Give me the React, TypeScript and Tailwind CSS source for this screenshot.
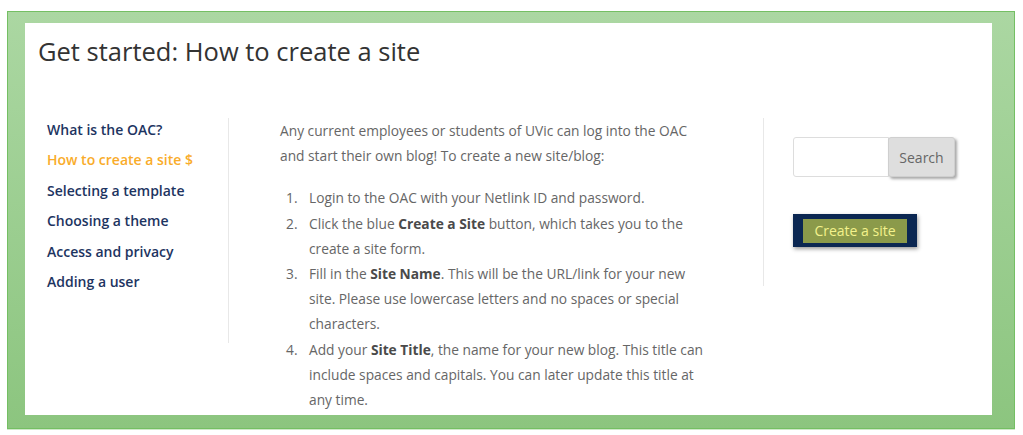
import React from "react";

const navItems = [
  { label: "What is the OAC?", active: false },
  { label: "How to create a site $", active: true },
  { label: "Selecting a template", active: false },
  { label: "Choosing a theme", active: false },
  { label: "Access and privacy", active: false },
  { label: "Adding a user", active: false },
];

export default function App() {
  return (
    <div
      className="w-[1023px] h-[435px] bg-white pt-[11px] pl-[7px] overflow-hidden"
      style={{ fontFamily: '"Open Sans", "Liberation Sans", sans-serif' }}
    >
      <div className="w-[1008px] h-[418px] border border-[#74bf63] bg-gradient-to-b from-[#abd7a2] to-[#8cc57f] pl-[17px] pt-[11px] shadow-[0_1px_0_#cfe8c9]">
        <div className="w-[967px] h-[392px] bg-white overflow-hidden flex flex-col">
          <h1 className="text-[25.5px] leading-[34px] text-[#333333] pl-[13px] pt-[11px] font-normal">
            Get started: How to create a site
          </h1>
          <div className="flex mt-[50px]">
            <nav className="w-[204px] border-r border-[#e8e8e8] h-[225px] pl-[22px]">
              <ul className="flex flex-col -mt-[3px]">
                {navItems.map((item) => (
                  <li
                    key={item.label}
                    className={`text-[14px] leading-[30.4px] font-semibold ${
                      item.active ? "text-[#f9ac2a]" : "text-[#1d3461]"
                    }`}
                  >
                    {item.label}
                  </li>
                ))}
              </ul>
            </nav>
            <div className="w-[535px] border-r border-[#e8e8e8] self-start h-[168px] overflow-visible pl-[51px]">
              <div className="w-[430px] text-[13.75px] leading-[25.2px] text-[#666666]">
                <p>
                  Any current employees or students of UVic can log into the OAC and start their own blog! To create a new site/blog:
                </p>
                <ol className="mt-[17px] flex flex-col">
                  {[
                    <>Login to the OAC with your Netlink ID and password.</>,
                    <>
                      Click the blue <b className="font-bold text-[#4a4a4a]">Create a Site</b> button, which takes you to the create a site form.
                    </>,
                    <>
                      Fill in the <b className="font-bold text-[#4a4a4a]">Site Name</b>. This will be the URL/link for your new site. Please use lowercase letters and no spaces or special characters.
                    </>,
                    <>
                      Add your <b className="font-bold text-[#4a4a4a]">Site Title</b>, the name for your new blog. This title can include spaces and capitals. You can later update this title at any time.
                    </>,
                  ].map((content, i) => (
                    <li key={i} className="flex">
                      <span className="w-[29px] shrink-0 pl-[6px]">{i + 1}.</span>
                      <span>{content}</span>
                    </li>
                  ))}
                </ol>
              </div>
            </div>
            <div className="pl-[29px] pt-[19px] flex flex-col">
              <div className="flex">
                <div className="w-[96px] h-[40px] border border-[#dddddd] rounded-l-[3px] bg-white" />
                <button className="w-[67px] h-[40px] bg-[#dedede] border border-[#cfcfcf] rounded-[3px] text-[14px] text-[#666666] shadow-[2px_2px_3px_rgba(0,0,0,0.35)] -ml-[1px]">
                  Search
                </button>
              </div>
              <div className="mt-[37px] w-[124px] h-[33px] bg-[#0b2752] flex items-center justify-center shadow-[1px_2px_4px_rgba(0,0,0,0.4)]">
                <span className="bg-[#8b9a4a] text-[#f3f28c] text-[14px] leading-[24px] px-[11px]">
                  Create a site
                </span>
              </div>
            </div>
          </div>
        </div>
      </div>
    </div>
  );
}
